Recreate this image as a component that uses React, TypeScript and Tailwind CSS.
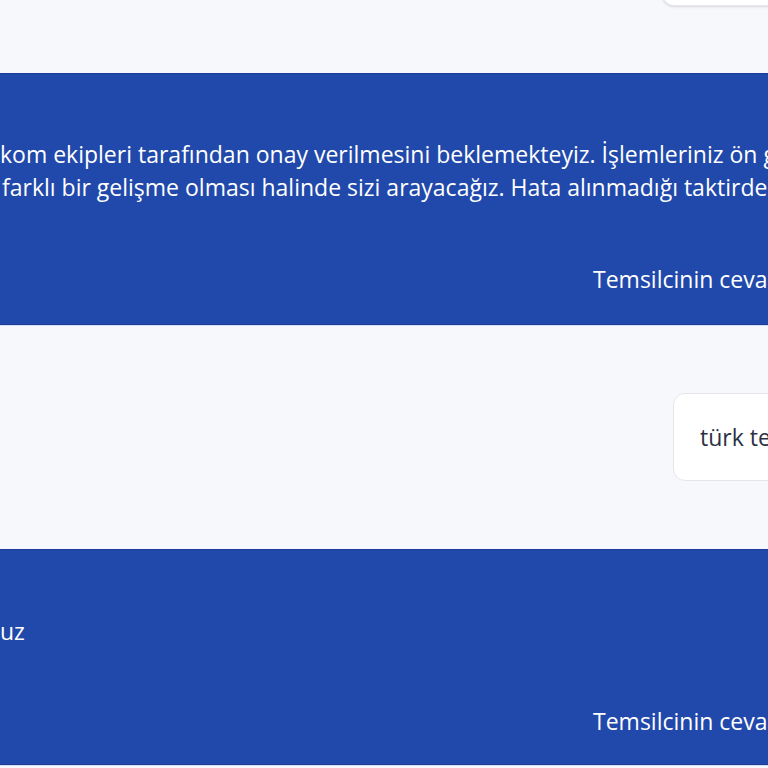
export default function App() {
  return (
    <div
      className="w-[768px] h-[768px] overflow-hidden bg-[#f7f8fc] flex flex-col"
      style={{ fontFamily: '"Open Sans", "Noto Sans", sans-serif' }}
    >
      {/* previous user message, only its bottom edge is visible */}
      <div className="flex justify-end">
        <div className="-mt-[40px] mr-[-30px] h-[46px] w-[136px] rounded-xl border border-[#e6e8ee] bg-white shadow-sm" />
      </div>

      {/* agent reply 1 */}
      <div className="mt-[67px] h-[252px] shrink-0 border-y border-[#1b3c98] bg-[#2149ab] text-white text-[23px] shadow-[0_1px_0_#d6def2]">
        <div className="pt-[64px] leading-[33px]">
          <div className="whitespace-nowrap">
            kom ekipleri tarafından onay verilmesini beklemekteyiz. İşlemleriniz ön görüşme
          </div>
          <div className="whitespace-nowrap pl-[2px]">
            farklı bir gelişme olması halinde sizi arayacağız. Hata alınmadığı taktirde işleminiz
          </div>
        </div>
        <div className="mt-[59px] ml-[593px] whitespace-nowrap leading-[33px]">Temsilcinin cevabı</div>
      </div>

      {/* user message */}
      <div className="flex justify-end pt-[68px]">
        <div className="mr-[-60px] flex h-[88px] w-[155px] shrink-0 items-center rounded-xl border border-[#e4e6ec] bg-white pl-[26px] text-[23px] text-[#2b3045] whitespace-nowrap">
          türk telekom
        </div>
      </div>

      {/* agent reply 2 */}
      <div className="mt-[68px] h-[216px] shrink-0 border-y border-[#1b3c98] bg-[#2149ab] text-white text-[23px] shadow-[0_1px_0_#d6def2]">
        <div className="pt-[65px] leading-[33px] whitespace-nowrap">uz</div>
        <div className="mt-[57px] ml-[593px] whitespace-nowrap leading-[33px]">Temsilcinin cevabı</div>
      </div>
    </div>
  )
}
